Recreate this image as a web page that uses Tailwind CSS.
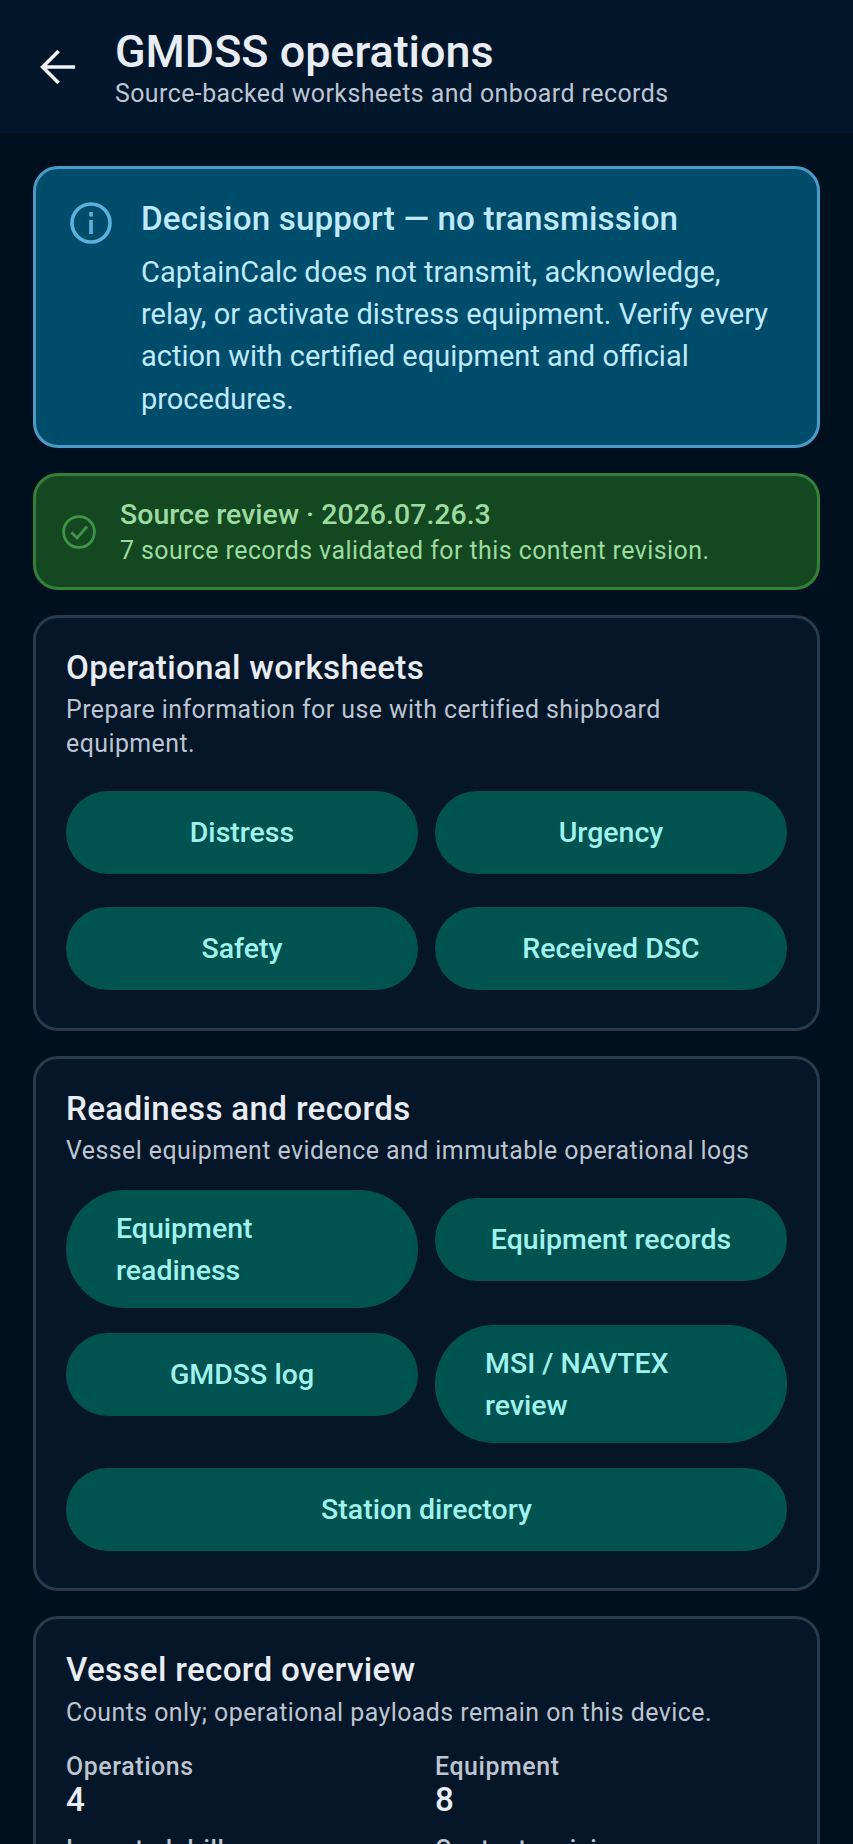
<!DOCTYPE html>
<html lang="en">
  <head>
    <meta charset="UTF-8" />
    <meta name="viewport" content="width=device-width, initial-scale=1.0" />
    <script src="https://cdn.jsdelivr.net/npm/@tailwindcss/browser@4"></script>
    <title>GMDSS operations</title>
  </head>
  <body class="bg-[#00101f] font-['Roboto',sans-serif] h-[1844px] overflow-hidden">
    <header class="bg-[#02162b] h-[133px] flex items-center pl-[33px]">
      <svg class="w-[50px] h-[50px] mt-[1px] mr-[32px] shrink-0" viewBox="0 0 24 24" fill="none" stroke="#f1f4f9" stroke-width="1.7">
        <path d="M20.2 12H4.6M12.3 4.3 4.6 12l7.7 7.7" />
      </svg>
      <div>
        <h1 class="text-[44.9px] leading-[58px] font-medium text-[#e8edf5]">GMDSS operations</h1>
        <p class="text-[24.9px] leading-[33px] tracking-[0.45px] text-[#bcc5d1] -mt-[4px]">Source-backed worksheets and onboard records</p>
      </div>
    </header>

    <main class="px-[33px] pt-[33px] flex flex-col gap-[25px]">
      <section class="h-[282px] rounded-[25px] bg-[#004d6b] border-[3px] border-[#4a9cc7] flex pl-[33px] pr-[28px] pt-[29px]">
        <svg class="w-[44px] h-[44px] mr-[28px] mt-[3px] shrink-0" viewBox="0 0 44 44" fill="none" stroke="#5eb1de" stroke-width="3.6">
          <circle cx="22" cy="22" r="19" />
          <path d="M22 19v14M22 11v4.5" />
        </svg>
        <div>
          <h2 class="text-[33.2px] leading-[42px] font-medium tracking-[0.15px] text-[#bfe9ff]">Decision support — no transmission</h2>
          <p class="text-[29px] leading-[42.2px] text-[#bfe9ff] mt-[11px]">CaptainCalc does not transmit, acknowledge, relay, or activate distress equipment. Verify every action with certified equipment and official procedures.</p>
        </div>
      </section>

      <section class="h-[117px] rounded-[25px] bg-[#134820] border-[3px] border-[#33803a] flex items-center pl-[26px]">
        <svg class="w-[34px] h-[34px] mr-[24px] shrink-0" viewBox="0 0 34 34" fill="none" stroke="#3f9446" stroke-width="2.8">
          <circle cx="17" cy="17" r="15.4" />
          <path d="m9.5 17.5 5.5 5.5 10-11.5" />
        </svg>
        <div>
          <p class="text-[28.5px] leading-[38px] font-medium text-[#9ddca1]">Source review · 2026.07.26.3</p>
          <p class="text-[24.9px] leading-[33px] tracking-[0.45px] text-[#9ddca1]">7 source records validated for this content revision.</p>
        </div>
      </section>

      <section class="h-[416px] rounded-[25px] bg-[#041627] border-[3px] border-[#263b4c] pl-[30px] pr-[30px] pt-[29px]">
        <h2 class="text-[33.2px] leading-[42px] font-medium tracking-[0.3px] text-[#e8edf5]">Operational worksheets</h2>
        <p class="text-[24.9px] leading-[33.5px] tracking-[0.45px] text-[#bcc5d1] mt-[4px]">Prepare information for use with certified shipboard equipment.</p>
        <div class="grid grid-cols-2 gap-x-[17px] gap-y-[33px] mt-[31px]">
          <a class="h-[83px] pt-[2px] rounded-full bg-[#005350] flex items-center justify-center text-[28.5px] font-medium text-[#a0f2ec]">Distress</a>
          <a class="h-[83px] pt-[2px] rounded-full bg-[#005350] flex items-center justify-center text-[28.5px] font-medium text-[#a0f2ec]">Urgency</a>
          <a class="h-[83px] pt-[2px] rounded-full bg-[#005350] flex items-center justify-center text-[28.5px] font-medium text-[#a0f2ec]">Safety</a>
          <a class="h-[83px] pt-[2px] rounded-full bg-[#005350] flex items-center justify-center text-[28.5px] font-medium text-[#a0f2ec]">Received DSC</a>
        </div>
      </section>

      <section class="h-[535px] rounded-[25px] bg-[#041627] border-[3px] border-[#263b4c] pl-[30px] pr-[30px] pt-[29px]">
        <h2 class="text-[33.2px] leading-[42px] font-medium tracking-[0.3px] text-[#e8edf5]">Readiness and records</h2>
        <p class="text-[24.9px] leading-[33.5px] tracking-[0.45px] text-[#bcc5d1] mt-[4px]">Vessel equipment evidence and immutable operational logs</p>
        <div class="grid grid-cols-2 gap-x-[17px] gap-y-[17px] mt-[22px] items-start">
          <a class="h-[118px] pt-[2px] rounded-[59px] bg-[#005350] flex items-center px-[50px] text-[28.5px] leading-[42px] font-medium text-[#a0f2ec]">Equipment readiness</a>
          <a class="h-[83px] pt-[2px] mt-[8px] rounded-full bg-[#005350] flex items-center justify-center text-[28.5px] font-medium text-[#a0f2ec]">Equipment records</a>
          <a class="h-[83px] pt-[2px] mt-[8px] rounded-full bg-[#005350] flex items-center justify-center text-[28.5px] font-medium text-[#a0f2ec]">GMDSS log</a>
          <a class="h-[118px] pt-[2px] rounded-[59px] bg-[#005350] flex items-center px-[50px] text-[28.5px] leading-[42px] font-medium text-[#a0f2ec]">MSI / NAVTEX review</a>
          <a class="col-span-2 h-[83px] pt-[2px] mt-[8px] rounded-full bg-[#005350] flex items-center justify-center text-[28.5px] font-medium text-[#a0f2ec]">Station directory</a>
        </div>
      </section>

      <section class="h-[400px] rounded-[25px] bg-[#041627] border-[3px] border-[#263b4c] pl-[30px] pr-[30px] pt-[30px]">
        <h2 class="text-[33.2px] leading-[42px] font-medium tracking-[0.3px] text-[#e8edf5]">Vessel record overview</h2>
        <p class="text-[24.9px] leading-[33.5px] tracking-[0.45px] text-[#bcc5d1] mt-[5px]">Counts only; operational payloads remain on this device.</p>
        <div class="grid grid-cols-2 gap-x-[17px] gap-y-[17px] mt-[20px]">
          <div>
            <p class="text-[24.9px] leading-[33px] font-medium tracking-[0.6px] text-[#bcc5d1]">Operations</p>
            <p class="text-[33.2px] leading-[33px] font-medium text-[#e8edf5]">4</p>
          </div>
          <div>
            <p class="text-[24.9px] leading-[33px] font-medium tracking-[0.6px] text-[#bcc5d1]">Equipment</p>
            <p class="text-[33.2px] leading-[33px] font-medium text-[#e8edf5]">8</p>
          </div>
          <div>
            <p class="text-[24.9px] leading-[33px] font-medium tracking-[0.6px] text-[#bcc5d1]">Imported drills</p>
          </div>
          <div>
            <p class="text-[24.9px] leading-[33px] font-medium tracking-[0.6px] text-[#bcc5d1]">Content revision</p>
          </div>
        </div>
      </section>
    </main>
  </body>
</html>
